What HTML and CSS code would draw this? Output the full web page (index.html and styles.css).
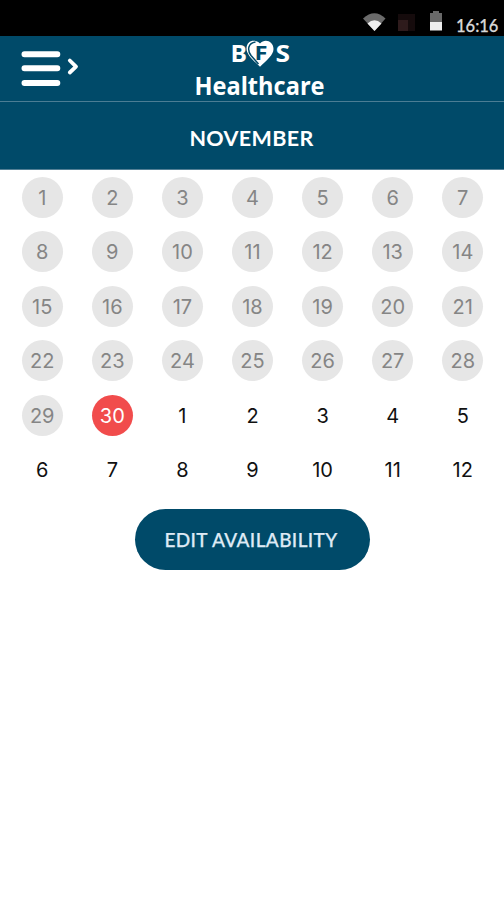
FILE: index.html
```html
<!DOCTYPE html>
<html lang="en">
<head>
<meta charset="utf-8">
<title>BFS Healthcare</title>
<link rel="stylesheet" href="styles.css">
</head>
<body>
<div class="statusbar">
  <svg class="status-icons" width="90" height="36" viewBox="0 0 90 36" aria-hidden="true">
    <path d="M3 18.500Q14.500 8 25.500 18.500L14.500 31Z" fill="#6b6b6b"/>
    <path d="M7.500 23.500Q14.500 17 21.500 23.500L14.500 31Z" fill="#eee"/>
    <path d="M38 14h17v17H38z" fill="#150b0c"/>
    <path d="M38 20h10v11H38z" fill="#2e1b1c"/>
    <path d="M70 13h3v-2h6v2h3v9H70z" fill="#696969"/>
    <path d="M70 22h12v8.500H70z" fill="#eee"/>
  </svg>
  <span class="clock">16:16</span>
</div>
<header class="header">
  <svg class="menu" width="64" height="44" viewBox="0 0 64 44" fill="none" stroke="#fff" stroke-linecap="round" stroke-linejoin="round">
    <path d="M6.500 8.200H39.300M6.500 22.200H39.300M6.500 37H39.300" stroke-width="6"/>
    <path d="M51.800 14.500L58 20.700L51.800 26.500" stroke-width="3.800"/>
  </svg>
  <svg class="logo" width="140" height="62" viewBox="190 38 140 62">
    <g class="logo-text">
      <text x="230.500" y="61.500" font-size="24" textLength="16.500" lengthAdjust="spacingAndGlyphs">B</text>
      <text x="275.500" y="61.500" font-size="24" textLength="14.500" lengthAdjust="spacingAndGlyphs">S</text>
      <text x="194.500" y="94.500" font-size="25" textLength="130" lengthAdjust="spacingAndGlyphs">Healthcare</text>
    </g>
    <path d="M260 66.800C254 61 246.500 55 246.500 48.500C246.500 40.500 255 38.500 260 43.500C265 38 273.500 41.500 273.500 49C273.500 55 267 60 260 66.800Z" fill="#fff"/>
    <path d="M255.500 42C248 43 247 50 251 55.500L258.500 64" fill="none" stroke="#004a69" stroke-width="1.500"/>
    <text class="logo-f" x="254.500" y="59.500" font-size="20" textLength="13" lengthAdjust="spacingAndGlyphs">F</text>
  </svg>
</header>
<div class="month">NOVEMBER</div>
<main>
  <div class="days">
    <span class="past">1</span><span class="past">2</span><span class="past">3</span><span class="past">4</span><span class="past">5</span><span class="past">6</span><span class="past">7</span>
    <span class="past">8</span><span class="past">9</span><span class="past">10</span><span class="past">11</span><span class="past">12</span><span class="past">13</span><span class="past">14</span>
    <span class="past">15</span><span class="past">16</span><span class="past">17</span><span class="past">18</span><span class="past">19</span><span class="past">20</span><span class="past">21</span>
    <span class="past">22</span><span class="past">23</span><span class="past">24</span><span class="past">25</span><span class="past">26</span><span class="past">27</span><span class="past">28</span>
    <span class="past">29</span><span class="today">30</span><span>1</span><span>2</span><span>3</span><span>4</span><span>5</span>
    <span>6</span><span>7</span><span>8</span><span>9</span><span>10</span><span>11</span><span>12</span>
  </div>
  <button class="edit">EDIT AVAILABILITY</button>
</main>
</body>
</html>
```
FILE: styles.css
```css
* { box-sizing: border-box; }
body { margin: 0; min-height: 900px; background: #fff; font-family: Inter, sans-serif; }
.statusbar { display: flex; justify-content: flex-end; height: 36px; background: #000; }
.status-icons { margin-right: 6px; }
.clock { width: 48px; padding-top: 16px; color: #d8d8d8; font: 500 16.5px/20px Lato, sans-serif; letter-spacing: 0; -webkit-text-stroke: .25px #d8d8d8; }
.header { display: grid; grid-template-columns: 172px 140px 1fr; height: 66px; padding-left: 18px; background: #004a69; border-bottom: 1px solid #4b7d94; }
.menu { margin-top: 10px; }
.logo { margin-top: 2px; overflow: visible; }
.logo-text { fill: #fff; font-family: "Open Sans", sans-serif; font-weight: 700; }
.logo-f { fill: #004a69; font-family: "Open Sans", sans-serif; font-weight: 700; }
.month { display: flex; align-items: center; justify-content: center; height: 68px; padding: 5px 1px 0 0; background: #004a69; border-bottom: 1px solid #527f95; color: #fff; font: 700 21.5px/26px Lato, sans-serif; letter-spacing: .35px; }
main { display: flex; flex-direction: column; align-items: center; }
.days { display: grid; grid-template-columns: repeat(7, 70.1px); grid-auto-rows: 54.5px; place-items: center; margin-left: 1px; color: #111; font-size: 20px; }
.days span { display: grid; place-items: center; width: 41px; height: 41px; padding-top: 1px; border-radius: 50%; }
.days .past { background: #e6e6e6; color: #858585; }
.days .today { background: #f14c4c; color: #fff; }
.edit { width: 235px; height: 61px; margin-top: 11.500px; padding: 1px 2px 0 0; border: 0; border-radius: 31px; background: #004a69; color: #dfeaf5; font: 500 19px/24px Lato, sans-serif; letter-spacing: .38px; -webkit-text-stroke: .25px #dfeaf5; }
```
